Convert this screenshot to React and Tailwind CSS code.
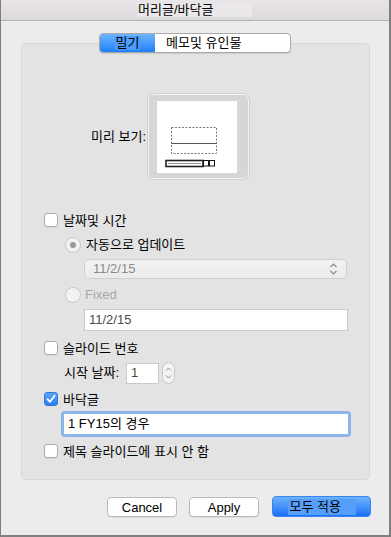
import React from 'react';

const font = { fontFamily: '"Liberation Sans", "Noto Sans CJK KR", sans-serif' };

function Check({ checked }) {
  if (checked) {
    return (
      <div className="w-[14px] h-[14px] rounded-[3px] bg-gradient-to-b from-[#5aa6fa] to-[#2a7df0] border border-[#2b79e3] flex items-center justify-center">
        <svg width="10" height="10" viewBox="0 0 10 10">
          <path d="M1.5 5.2 L4 7.8 L8.6 1.8" fill="none" stroke="white" strokeWidth="1.8" strokeLinecap="round" strokeLinejoin="round" />
        </svg>
      </div>
    );
  }
  return <div className="w-[14px] h-[14px] rounded-[3px] bg-white border border-[#acacac] shadow-[0_1px_0_rgba(0,0,0,0.05)]" />;
}

function Radio({ selected }) {
  return (
    <div className="w-[16px] h-[16px] rounded-full border border-[#c9c9c9] bg-[#f2f2f2] flex items-center justify-center">
      {selected && <div className="w-[6px] h-[6px] rounded-full bg-[#9a9a9a]" />}
    </div>
  );
}

function CheckRow({ checked, label, className }) {
  return (
    <div className={`flex items-center h-[18px] pl-[22px] ${className}`}>
      <Check checked={checked} />
      <span className="ml-[5px] text-[13px] text-black leading-none">{label}</span>
    </div>
  );
}

export default function App() {
  return (
    <div style={font} className="w-[391px] h-[537px] bg-[#ececec] border-l border-r-2 border-b-2 border-[#7f7f7f] flex flex-col">
      {/* Title bar */}
      <div className="h-[21px] shrink-0 bg-gradient-to-b from-[#e9e5e8] to-[#ddd9dc] border-b border-[#b3b3b3] flex justify-center">
        <div className="w-[114px] h-[14px] mt-[3px] bg-[#ebe8eb] text-[13px] leading-[14px] text-black">머리글/바닥글</div>
      </div>

      {/* Tabs */}
      <div className="mt-[12px] flex justify-center relative z-10">
        <div className="flex h-[20px] rounded-[4px] border border-[#a9a9a9] overflow-hidden bg-white shadow-[0_1px_1px_rgba(0,0,0,0.1)]">
          <div className="w-[55px] bg-gradient-to-b from-[#6db4fb] to-[#1b7ffa] flex items-center justify-center">
            <span className="text-[13px] leading-[14px] text-black bg-[#4c9cfb] px-[1px]">밀기</span>
          </div>
          <div className="w-[135px] flex items-center pl-[11px] text-[13px] text-black">메모및 유인물</div>
        </div>
      </div>

      {/* Panel */}
      <div className="-mt-[10px] ml-[20px] w-[349px] h-[437px] bg-[#e3e3e3] border border-[#d7d7d7] rounded-[5px] flex flex-col">
        {/* Preview */}
        <div className="mt-[50px] h-[85px] flex items-center pl-[69px]">
          <span className="text-[13px] text-black">미리 보기:</span>
          <div className="ml-auto mr-[120px] w-[101px] h-[85px] rounded-[6px] bg-[#d6d6d6] border border-[#f4f4f4] shadow-[0_0_0_1px_#d0d0d0] pl-[8px] pt-[6px]">
            <div className="w-[80px] h-[72px] bg-white">
              <svg width="80" height="72" viewBox="0 0 80 72">
                <rect x="14.5" y="26.5" width="45" height="26" fill="none" stroke="#777" strokeDasharray="2 1.5" />
                <line x1="14.5" y1="42.5" x2="59.5" y2="42.5" stroke="#555" />
                <rect x="9" y="59.5" width="37" height="6" fill="white" stroke="#222" strokeWidth="1.6" />
                <line x1="11" y1="62.5" x2="44" y2="62.5" stroke="#999" />
                <rect x="46.5" y="59.5" width="5" height="5.5" fill="white" stroke="#111" />
                <rect x="52.5" y="59.5" width="5" height="5.5" fill="white" stroke="#111" />
              </svg>
            </div>
          </div>
        </div>

        <CheckRow label="날짜및 시간" className="mt-[32px]" />

        <div className="mt-[7px] h-[17px] flex items-center pl-[43px]">
          <Radio selected />
          <span className="ml-[5px] text-[13px] text-black">자동으로 업데이트</span>
        </div>

        <div className="mt-[6px] ml-[62px] w-[263px] h-[20px] rounded-[5px] border border-[#d0d0d0] bg-gradient-to-b from-[#f2f2f2] to-[#ebebeb] flex items-center px-[8px]">
          <span className="text-[13px] text-[#8a8a8a]">11/2/15</span>
          <svg className="ml-auto" width="9" height="14" viewBox="0 0 9 14">
            <path d="M1.5 5 L4.5 2 L7.5 5 M1.5 9 L4.5 12 L7.5 9" fill="none" stroke="#8c8c8c" strokeWidth="1.2" />
          </svg>
        </div>

        <div className="mt-[7px] h-[17px] flex items-center pl-[43px]">
          <Radio />
          <span className="ml-[4px] text-[13px] text-[#a8a8a8]">Fixed</span>
        </div>

        <div className="mt-[6px] ml-[62px] w-[264px] h-[22px] bg-white border border-[#c9c9c9] flex items-center px-[4px]">
          <span className="text-[13px] text-[#4a4a4a]">11/2/15</span>
        </div>

        <CheckRow label="슬라이드 번호" className="mt-[8px]" />

        <div className="mt-[5px] h-[22px] flex items-center pl-[42px]">
          <span className="text-[13px] text-black">시작 날짜:</span>
          <div className="ml-[7px] w-[33px] h-[21px] bg-white border border-[#cacaca] flex items-center px-[4px]">
            <span className="text-[13px] text-[#5a4030]">1</span>
          </div>
          <div className="ml-[3px] w-[13px] h-[22px] rounded-full border border-[#c6c6c6] bg-[#f3f3f3] flex items-center justify-center">
            <svg width="7" height="14" viewBox="0 0 7 14">
              <path d="M1 4.5 L3.5 2 L6 4.5 M1 9.5 L3.5 12 L6 9.5" fill="none" stroke="#8e8e8e" strokeWidth="1" />
            </svg>
          </div>
        </div>

        <CheckRow checked label="바닥글" className="mt-[6px]" />

        <div className="mt-[5px] ml-[41px] w-[286px] h-[22px] bg-white border border-[#8fb6e6] ring-2 ring-[#8ab4ea] rounded-[2px] flex items-center px-[4px]">
          <span className="text-[13px] text-black">1 FY15의 경우</span>
        </div>

        <CheckRow label="제목 슬라이드에 표시 안 함" className="mt-[7px]" />
      </div>

      {/* Buttons */}
      <div className="mt-[16px] flex items-center pl-[106px]">
        <button className="w-[70px] h-[20px] bg-white border border-[#b9b9b9] rounded-[4px] text-[13px] text-black shadow-[0_1px_0_rgba(0,0,0,0.06)]">Cancel</button>
        <button className="ml-[12px] w-[70px] h-[20px] bg-white border border-[#b9b9b9] rounded-[4px] text-[13px] text-black shadow-[0_1px_0_rgba(0,0,0,0.06)]">Apply</button>
        <button className="ml-[13px] w-[99px] h-[21px] rounded-[4px] border border-[#3a84ee] bg-gradient-to-b from-[#6cb2fb] to-[#1a6ff8] flex items-center justify-center">
          <span className="text-[13px] leading-[16px] text-black bg-[#559ffb] px-[2px] w-[68px] text-left">모두 적용</span>
        </button>
      </div>
    </div>
  );
}
